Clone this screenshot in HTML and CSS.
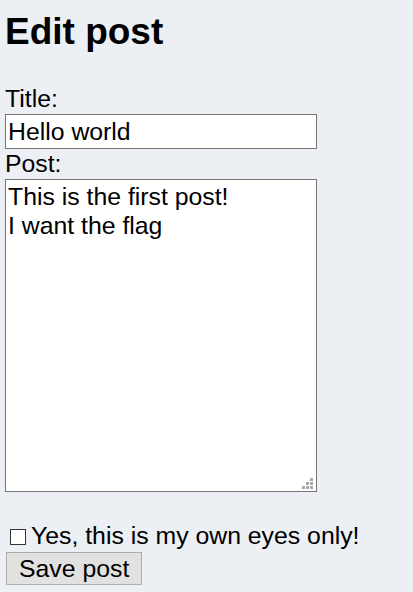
FILE: index.html
```html
<!DOCTYPE html>
<html>
<head>
  <title>Edit post</title>
  <link rel="stylesheet" href="styles.css">
</head>
<body>
  <h1>Edit post</h1>
  <form class="post-form">
    <label for="title" class="field-label">Title:</label>
    <input type="text" id="title" name="title" class="title-input" value="Hello world">
    <label for="content" class="field-label">Post:</label>
    <div class="post-wrap">
      <textarea id="content" name="content" class="post-input">This is the first post!
I want the flag</textarea>
    </div>
    <label class="private-row"><input type="checkbox" name="private" class="private-check">Yes, this is my own eyes only!</label>
    <button type="submit" class="save-btn">Save post</button>
  </form>

  <script>
    // put the caret after the last word, like in the screenshot
    var post = document.getElementById("content");
    post.focus();
    post.setSelectionRange(post.value.length, post.value.length);
  </script>
</body>
</html>
```

FILE: styles.css
```css
body {
  margin: 0 5px;
  background-color: #eceff4;
  color: #000;
  font-family: "Liberation Sans", Arial, sans-serif;
  font-size: 24.8px;
}
h1 {
  font-size: 37px;
  line-height: 43px;
  margin: 10px 0 31px;
}
.field-label {
  display: block;
  line-height: 30px;
}
.title-input,
.post-input {
  display: block;
  box-sizing: border-box;
  width: 312px;
  font: inherit;
  color: #000;
  background-color: #fff;
  border: 1px solid #767676;
  border-radius: 0;
  outline: none;
  margin: 0;
}
.title-input {
  height: 35px;
  padding: 0 2px;
}
.post-wrap {
  position: relative;
  width: 312px;
  margin-bottom: 29px;
}
.post-input {
  height: 313px;
  line-height: 29px;
  padding: 2px;
  resize: none;
}
/* dotted resize grip */
.post-wrap::after {
  content: "";
  position: absolute;
  right: 4px;
  bottom: 3px;
  width: 3px;
  height: 3px;
  background: #aaa;
  box-shadow: -4px 0 #aaa, -8px 0 #aaa, 0 -4px #aaa, -4px -4px #aaa, 0 -8px #aaa;
}
.private-row {
  display: block;
  line-height: 30px;
}
.private-check {
  appearance: none;
  -webkit-appearance: none;
  box-sizing: border-box;
  width: 16px;
  height: 16px;
  margin: 0 5px 0 5px;
  border: 1px solid #333;
  background-color: #fff;
  vertical-align: -1px;
}
.save-btn {
  display: block;
  margin: 1px 0 0 1px;
  padding: 0 12px;
  height: 33px;
  font: inherit;
  color: #000;
  background-color: #e1e1e1;
  border: 1px solid #adadad;
  border-radius: 0;
}
```
